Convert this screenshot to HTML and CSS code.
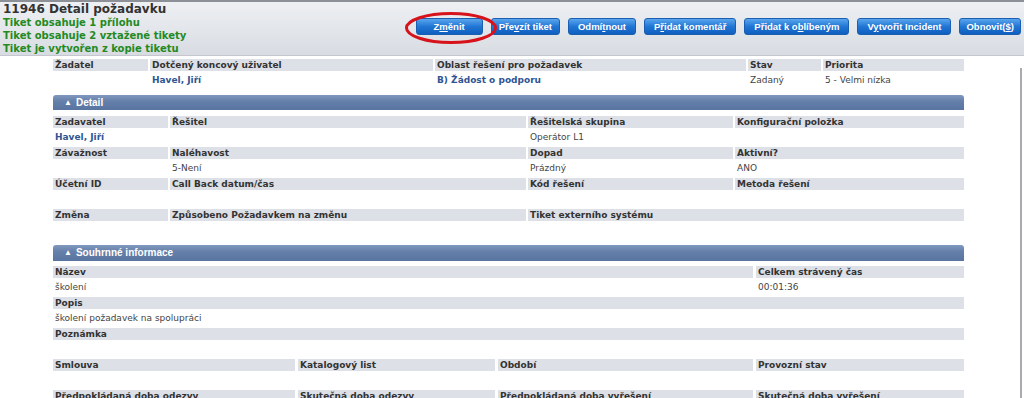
FILE: index.html
```html
<!DOCTYPE html>
<html lang="cs">
<head>
  <meta charset="utf-8">
  <title>11946 Detail požadavku</title>
  <link rel="stylesheet" href="styles.css">
</head>
<body>
<div class="head">
  <div class="head-info">
    <h1 class="title">11946 Detail požadavku</h1>
    <p class="note">Tiket obsahuje 1 přílohu</p>
    <p class="note">Tiket obsahuje 2 vztažené tikety</p>
    <p class="note">Tiket je vytvořen z kopie tiketu</p>
  </div>
  <div class="actions">
    <span class="marked">
      <button class="btn btn-first">Z<u>m</u>ěnit</button>
      <svg class="mark" width="94" height="34" viewBox="0 0 94 34"><ellipse cx="47" cy="17" rx="44.5" ry="14.5" fill="none" stroke="#d8121b" stroke-width="3"/></svg>
    </span>
    <button class="btn btn-take">Pře<u>v</u>zít tiket</button>
    <button class="btn">Odmí<u>t</u>nout</button>
    <button class="btn">P<u>ř</u>idat komentář</button>
    <button class="btn">Přidat k o<u>b</u>líbeným</button>
    <button class="btn">V<u>y</u>tvořit Incident</button>
    <button class="btn btn-narrow">Obnovit(<u>$</u>)</button>
  </div>
</div>

<div class="page">
  <div class="content">
    <div class="grid grid-top">
      <div class="lbl">Žadatel</div>
      <div class="lbl">Dotčený koncový uživatel</div>
      <div class="lbl">Oblast řešení pro požadavek</div>
      <div class="lbl">Stav</div>
      <div class="lbl">Priorita</div>
      <div class="val"></div>
      <div class="val link">Havel, Jiří</div>
      <div class="val link">B) Žádost o podporu</div>
      <div class="val">Zadaný</div>
      <div class="val">5 - Velmi nízka</div>
    </div>

    <div class="bar"><span class="arrow">▲</span>Detail</div>
    <div class="grid grid-detail">
      <div class="lbl">Zadavatel</div>
      <div class="lbl">Řešitel</div>
      <div class="lbl">Řešitelská skupina</div>
      <div class="lbl">Konfigurační položka</div>
      <div class="val link">Havel, Jiří</div>
      <div class="val"></div>
      <div class="val">Operátor L1</div>
      <div class="val"></div>

      <div class="lbl">Závažnost</div>
      <div class="lbl">Naléhavost</div>
      <div class="lbl">Dopad</div>
      <div class="lbl">Aktivní?</div>
      <div class="val"></div>
      <div class="val">5-Není</div>
      <div class="val">Prázdný</div>
      <div class="val">ANO</div>

      <div class="lbl">Účetní ID</div>
      <div class="lbl">Call Back datum/čas</div>
      <div class="lbl">Kód řešení</div>
      <div class="lbl">Metoda řešení</div>
      <div class="val"></div>
      <div class="val"></div>
      <div class="val"></div>
      <div class="val"></div>

      <div class="lbl">Změna</div>
      <div class="lbl">Způsobeno Požadavkem na změnu</div>
      <div class="lbl span-2">Tiket externího systému</div>
      <div class="val"></div>
      <div class="val"></div>
      <div class="val span-2"></div>
    </div>

    <div class="bar bar-sum"><span class="arrow">▲</span>Souhrnné informace</div>
    <div class="grid grid-sum">
      <div class="lbl span-3">Název</div>
      <div class="lbl">Celkem strávený čas</div>
      <div class="val span-3">školení</div>
      <div class="val">00:01:36</div>

      <div class="lbl span-4">Popis</div>
      <div class="val span-4">školení požadavek na spolupráci</div>

      <div class="lbl span-4">Poznámka</div>
      <div class="val span-4"></div>

      <div class="lbl">Smlouva</div>
      <div class="lbl">Katalogový list</div>
      <div class="lbl">Období</div>
      <div class="lbl">Provozní stav</div>
      <div class="val"></div>
      <div class="val"></div>
      <div class="val"></div>
      <div class="val"></div>

      <div class="lbl">Předpokládaná doba odezvy</div>
      <div class="lbl">Skutečná doba odezvy</div>
      <div class="lbl">Předpokládaná doba vyřešení</div>
      <div class="lbl">Skutečná doba vyřešení</div>
    </div>
  </div>
  <div class="edge"></div>
</div>
</body>
</html>
```

FILE: styles.css
```css
* {
  margin: 0;
  padding: 0;
  box-sizing: border-box;
}

body {
  background: #fff;
  font-family: "DejaVu Sans", Verdana, sans-serif;
  font-size: 9px;
  color: #444;
  overflow: hidden;
}

.head {
  display: flex;
  justify-content: space-between;
  height: 56px;
  padding: 0 3px 0 3px;
  border-top: 2px solid #8d9096;
  border-bottom: 1px solid #c4c8ce;
  background: linear-gradient(#eef0f3, #d8dce2);
}

.title {
  font-size: 12px;
  line-height: 14px;
  font-weight: bold;
  color: #333;
}

.note {
  font-size: 10px;
  line-height: 13px;
  font-weight: bold;
  color: #238a23;
}

.actions {
  display: flex;
  align-items: flex-start;
  gap: 8px;
  padding-top: 16px;
}

.marked {
  position: relative;
  display: flex;
}

.mark {
  position: absolute;
  left: -12px;
  top: -7px;
}

.btn {
  height: 17px;
  padding: 0 9px;
  border: 1px solid #1a5fb0;
  border-radius: 3px;
  background: linear-gradient(#5aa6ee, #2176d4 50%, #0f5fbf);
  color: #fff;
  font-family: "Liberation Sans", Arial, sans-serif;
  font-size: 9.5px;
  font-weight: bold;
  line-height: 15px;
  white-space: nowrap;
}

.btn-first {
  width: 67px;
}

.btn-take {
  padding: 0 7px;
}

.btn-narrow {
  padding: 0 6px;
}

.page {
  display: flex;
}

.content {
  width: 1020px;
  padding: 3px 0 0 53px;
}

.edge {
  width: 2px;
  margin-top: 12px;
  background: #a9abae;
}

.grid {
  display: grid;
  width: 911px;
  column-gap: 2px;
}

.grid-top {
  grid-template-columns: 95px 283px 311px 73px 1fr;
}

.grid-detail {
  grid-template-columns: 115px 356px 205px 1fr;
}

.grid-sum {
  grid-template-columns: 242px 197px 255px 1fr;
  column-gap: 3px;
}

.span-2 { grid-column: span 2; }
.span-3 { grid-column: span 3; }
.span-4 { grid-column: span 4; }

.lbl {
  height: 12px;
  padding-left: 2px;
  background: #dde0e6;
  color: #333;
  font-weight: bold;
  line-height: 12px;
  white-space: nowrap;
}

.val {
  height: 19px;
  padding-left: 2px;
  line-height: 19px;
  white-space: nowrap;
}

.link {
  color: #2f5592;
  font-weight: bold;
}

.bar {
  width: 911px;
  height: 15px;
  margin: 5px 0 6px;
  padding-left: 11px;
  border-radius: 3px 3px 0 0;
  background: linear-gradient(#8199be, #6580aa 40%, #5874a0);
  color: #fff;
  font-family: "Liberation Sans", Arial, sans-serif;
  font-size: 10px;
  font-weight: bold;
  line-height: 15px;
}

.bar-sum {
  height: 16px;
  line-height: 16px;
  margin-bottom: 5px;
}

.arrow {
  font-size: 8px;
  margin-right: 4px;
  vertical-align: 1px;
}
```
